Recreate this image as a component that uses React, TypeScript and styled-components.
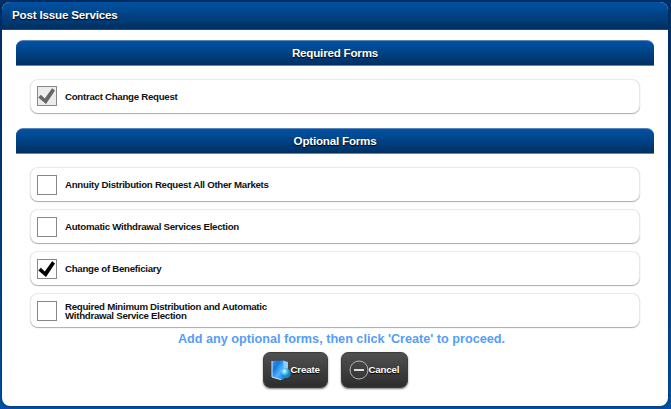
import React from "react";
import styled, { createGlobalStyle } from "styled-components";

const GlobalStyle = createGlobalStyle`
  * { box-sizing: border-box; }
  body {
    margin: 0;
    font-family: "Liberation Sans", Arial, sans-serif;
    font-weight: bold;
    color: #111;
  }
`;

const Backdrop = styled.main`
  width: 671px;
  height: 409px;
  padding: 2px 3px 3px 2px;
  background: linear-gradient(#002f63 0, #003a78 45%, #0050a0 100%);
  overflow: hidden;
`;

const Dialog = styled.section`
  width: 666px;
  height: 404px;
  border-radius: 8px;
  background: #fff;
  box-shadow: 0 0 2px #001f48;
  overflow: hidden;
`;

const TitleBar = styled.header`
  height: 28px;
  padding-left: 10px;
  border-bottom: 1px solid #1b4a88;
  background: linear-gradient(#0152a4, #003061);
  color: #fff;
  font-size: 11.6px;
  letter-spacing: -0.18px;
  line-height: 26px;
  text-shadow: 0 1px 1px #000;
`;

const Content = styled.div`
  padding: 10px 14px 0;
`;

const SectionHeading = styled.h2`
  height: 26px;
  margin: 0;
  border: 1px solid #5c83b5;
  border-width: 1px 0;
  border-radius: 7px 7px 0 0;
  background: linear-gradient(#0053a6, #003061);
  color: #fff;
  font-size: 11.6px;
  letter-spacing: -0.2px;
  line-height: 24px;
  text-align: center;
  text-shadow: 0 1px 1px #000;
`;

const FormList = styled.div<{ $bottom: number }>`
  display: flex;
  flex-direction: column;
  gap: 8px;
  padding: 13px 14px ${(p) => p.$bottom}px;
`;

const FormRow = styled.label`
  display: flex;
  align-items: center;
  height: 34px;
  padding: 1px 0 0 6px;
  border: 1px solid #e9e9e9;
  border-bottom: 0;
  border-radius: 8px;
  background: #fff;
  box-shadow: 0 1px 1px #aaa;
  font-size: 9.7px;
  letter-spacing: -0.28px;
  line-height: 9px;
`;

const CheckFrame = styled.span<{ $disabled?: boolean }>`
  flex: none;
  width: 20px;
  height: 20px;
  margin: 0 8px ${(p) => (p.$disabled ? 2 : 0)}px 0;
  border: 1px solid #888;
  background: ${(p) => (p.$disabled ? "#ececec" : "#fff")};
  color: ${(p) => (p.$disabled ? "#666" : "#000")};
  svg { display: block; }
`;

const FormName = styled.span`
  max-width: 215px;
  margin-bottom: 1px;
`;

const Hint = styled.p`
  margin: 0;
  padding-left: 13px;
  color: #559df8;
  font-size: 12.65px;
  line-height: 14px;
  text-align: center;
`;

const Actions = styled.footer`
  display: flex;
  justify-content: center;
  gap: 13px;
  margin: 6px 0 0;
`;

const ActionButton = styled.button<{ $width: number }>`
  display: flex;
  align-items: center;
  width: ${(p) => p.$width}px;
  height: 36px;
  padding: 0 0 0 7px;
  border: 1px solid #3c3c3c;
  border-radius: 7px;
  background: linear-gradient(#505050, #2d2d2d);
  box-shadow: 0 1px 2px #777;
  color: #fff;
  font: bold 9.7px "Liberation Sans", Arial, sans-serif;
  letter-spacing: -0.15px;
  text-shadow: 0 1px 1px #000;
  svg { flex: none; }
`;

const ButtonText = styled.span`
  padding-bottom: 1px;
`;

function CheckBox({ checked, disabled }: { checked?: boolean; disabled?: boolean }) {
  return (
    <CheckFrame $disabled={disabled} role="checkbox" aria-checked={!!checked}>
      {checked && (
        <svg width="18" height="18" viewBox="0 0 18 18">
          <path d="M.3 10.5 2.8 7.7l4 3.9L14.1 1.3l2.9 2.2L8 17z" fill="currentColor" />
        </svg>
      )}
    </CheckFrame>
  );
}

function FolderIcon() {
  return (
    <svg width="20" height="22" viewBox="0 0 20 22">
      <defs>
        <linearGradient id="folder" x2="1" y2="1">
          <stop stopColor="#3a9cf0" />
          <stop offset=".3" stopColor="#1278e0" />
          <stop offset=".6" stopColor="#55b4ff" />
          <stop offset="1" stopColor="#087be5" />
        </linearGradient>
        <radialGradient id="globe" cx=".35" cy=".3">
          <stop stopColor="#c9ffff" />
          <stop offset=".55" stopColor="#58c5ec" />
          <stop offset="1" stopColor="#168acb" />
        </radialGradient>
      </defs>
      <path d="M12 1.5 17 3v14l-5 2z" fill="#8ccaff" />
      <path d="M1 2 12 1.5 14 19l-3 2-10-3z" fill="url(#folder)" />
      <path d="M1 2v16l9 2.7" fill="none" stroke="#d3edff" strokeWidth="1" />
      <circle cx="14.8" cy="14.2" r="4.9" fill="url(#globe)" />
      <path d="m12.5 11 2.5 1" fill="none" stroke="#b8f4fa" strokeOpacity=".6" />
    </svg>
  );
}

function CancelIcon() {
  return (
    <svg width="20" height="20" viewBox="0 0 20 20">
      <circle cx="10" cy="10" r="9" fill="none" stroke="#b5b5b5" />
      <path d="M5 10h10" stroke="#ddd" strokeWidth="2" />
    </svg>
  );
}

const optionalForms = [
  { name: "Annuity Distribution Request All Other Markets" },
  { name: "Automatic Withdrawal Services Election" },
  { name: "Change of Beneficiary", checked: true },
  { name: "Required Minimum Distribution and Automatic Withdrawal Service Election" },
];

export default function App() {
  return (
    <>
      <GlobalStyle />
      <Backdrop>
        <Dialog>
          <TitleBar>Post Issue Services</TitleBar>
          <Content>
            <SectionHeading>Required Forms</SectionHeading>
            <FormList $bottom={15}>
              <FormRow>
                <CheckBox checked disabled />
                <FormName>Contract Change Request</FormName>
              </FormRow>
            </FormList>
            <SectionHeading>Optional Forms</SectionHeading>
            <FormList $bottom={5}>
              {optionalForms.map((form) => (
                <FormRow key={form.name}>
                  <CheckBox checked={form.checked} />
                  <FormName>{form.name}</FormName>
                </FormRow>
              ))}
            </FormList>
            <Hint>Add any optional forms, then click 'Create' to proceed.</Hint>
            <Actions>
              <ActionButton $width={65}><FolderIcon /><ButtonText>Create</ButtonText></ActionButton>
              <ActionButton $width={67}><CancelIcon /><ButtonText>Cancel</ButtonText></ActionButton>
            </Actions>
          </Content>
        </Dialog>
      </Backdrop>
    </>
  );
}
